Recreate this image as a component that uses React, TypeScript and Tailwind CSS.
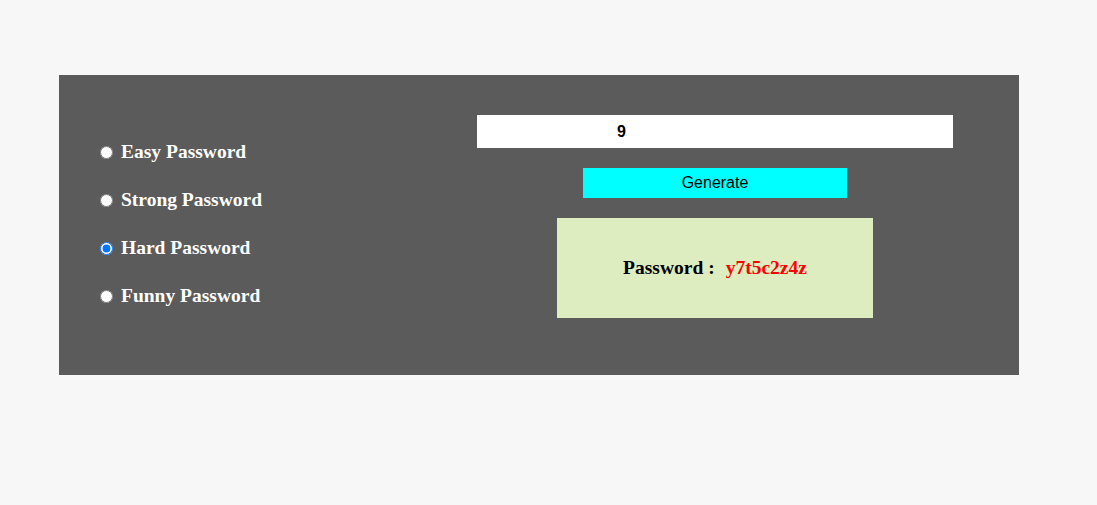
const options = ["Easy Password", "Strong Password", "Hard Password", "Funny Password"];

export default function App() {
  return (
    <div className="min-h-screen bg-[#f7f7f7] pl-[59px] pt-[75px]">
      <div className="flex h-[300px] w-[960px] bg-[#5b5b5b]">
        <div className="flex w-[418px] flex-col pl-[41px] pt-[53px]">
          {options.map((opt) => (
            <label key={opt} className="flex h-12 items-center gap-2">
              <input
                type="radio"
                name="kind"
                defaultChecked={opt === "Hard Password"}
                className="m-0 h-[13px] w-[13px]"
              />
              <span className="font-['Liberation_Serif',serif] text-[19.5px] font-bold text-white">
                {opt}
              </span>
            </label>
          ))}
        </div>

        <div className="flex w-[476px] flex-col items-center pt-[40px]">
          <input
            type="text"
            defaultValue="9"
            className="h-[33px] w-[476px] border-0 bg-white pl-[140px] font-['Liberation_Sans',sans-serif] text-[16px] font-bold text-black outline-none"
          />
          <button className="mt-5 h-[30px] w-[264px] bg-[#00ffff] font-['Liberation_Sans',sans-serif] text-[16px] text-black">
            Generate
          </button>
          <div className="mt-5 flex h-[100px] w-[316px] items-center justify-center bg-[#ddedc0] font-['Liberation_Serif',serif] text-[19.5px] font-bold">
            <span className="text-black">Password :</span>
            <span className="ml-[11px] text-[#ff0000]">y7t5c2z4z</span>
          </div>
        </div>
      </div>
    </div>
  );
}
